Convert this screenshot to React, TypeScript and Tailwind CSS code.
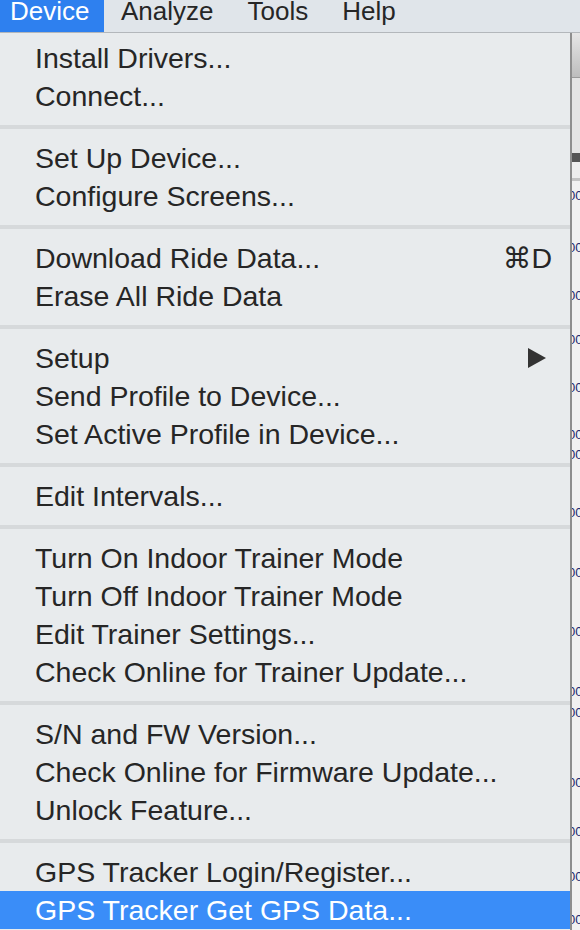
import { FC } from "react";

type Item = { label: string; shortcut?: string; submenu?: boolean; active?: boolean };

const groups: Item[][] = [
  [{ label: "Install Drivers..." }, { label: "Connect..." }],
  [{ label: "Set Up Device..." }, { label: "Configure Screens..." }],
  [{ label: "Download Ride Data...", shortcut: "⌘D" }, { label: "Erase All Ride Data" }],
  [
    { label: "Setup", submenu: true },
    { label: "Send Profile to Device..." },
    { label: "Set Active Profile in Device..." },
  ],
  [{ label: "Edit Intervals..." }],
  [
    { label: "Turn On Indoor Trainer Mode" },
    { label: "Turn Off Indoor Trainer Mode" },
    { label: "Edit Trainer Settings..." },
    { label: "Check Online for Trainer Update..." },
  ],
  [
    { label: "S/N and FW Version..." },
    { label: "Check Online for Firmware Update..." },
    { label: "Unlock Feature..." },
  ],
  [{ label: "GPS Tracker Login/Register..." }, { label: "GPS Tracker Get GPS Data...", active: true }],
];

// bits of the window behind the menu that peek out on the right
const peekRows = [22, 52, 48, 44, 48, 47, 20, 58, 60, 59, 60, 21, 70, 49, 45, 43];

const MenuRow: FC<{ item: Item }> = ({ item }) => (
  <div
    className={`flex h-[38px] items-center justify-between pl-[35px] ${
      item.submenu ? "pr-[24px]" : "pr-[18px]"
    } ${item.active ? "bg-[#3a8df8] text-white" : "text-[#262626]"}`}
  >
    <span className="whitespace-nowrap leading-[38px]">{item.label}</span>
    {item.shortcut && <span className="leading-[38px]">{item.shortcut}</span>}
    {item.submenu && (
      <svg width="18" height="20" viewBox="0 0 18 20">
        <path d="M0 0 L18 10 L0 20 Z" fill="#333333" />
      </svg>
    )}
  </div>
);

const App: FC = () => {
  return (
    <div
      className="h-[930px] w-[580px] overflow-hidden bg-[#e9ecee]"
      style={{ fontFamily: '"Liberation Sans", "DejaVu Sans", Arial, sans-serif' }}
    >
      {/* menu bar */}
      <div className="flex h-[33px] items-start overflow-hidden border-b border-[#b3b7bb] bg-[#e0e5ea] text-[26px] leading-[22px] text-[#262626]">
        <div className="h-[32px] w-[104px] bg-[#2e80ef] pl-[10px] text-white">Device</div>
        <div className="ml-[17px]">Analyze</div>
        <div className="ml-[34px]">Tools</div>
        <div className="ml-[34px]">Help</div>
      </div>

      <div className="flex h-[897px]">
        {/* dropdown */}
        <div className="w-[570px] bg-[#e8ebed] pt-[6px] text-[28.5px]">
          {groups.map((group, gi) => (
            <div key={gi}>
              {gi > 0 && (
                <div className="flex h-[24px] items-center">
                  <div className="h-[4px] w-full bg-[#d6d9db]" />
                </div>
              )}
              {group.map((item) => (
                <MenuRow key={item.label} item={item} />
              ))}
            </div>
          ))}
        </div>

        {/* window behind */}
        <div className="flex w-[10px] flex-col border-l-2 border-[#8e8e8e] bg-[#f1f1f1]">
          <div className="h-[44px] bg-gradient-to-b from-[#e6e6e6] to-[#bdbdbd]" />
          <div className="h-[1px] bg-[#9a9a9a]" />
          <div className="h-[75px] bg-[#e4e4e4]" />
          <div className="h-[9px] bg-[#555555]" />
          <div className="h-[16px] bg-[#eeeeee]" />
          <div className="h-[3px] bg-[#c4c4c4]" />
          {peekRows.map((h, i) => (
            <div key={i} className="flex shrink-0 items-end overflow-hidden" style={{ height: h }}>
              <span className="-ml-[4px] text-[13px] leading-[14px] text-[#1c2a6e]">00</span>
            </div>
          ))}
        </div>
      </div>
    </div>
  );
};

export default App;
